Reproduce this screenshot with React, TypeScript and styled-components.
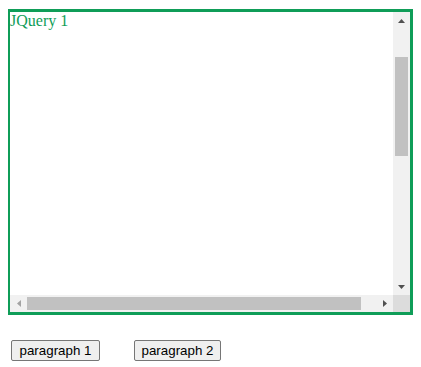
import React from "react";
import styled, { createGlobalStyle } from "styled-components";

const Global = createGlobalStyle`
  body { margin: 8px; font-family: "Liberation Serif", serif; background: #fff; }
`;

const Box = styled.div`
  width: 400px;
  height: 300px;
  border: 3px solid #0f9d58;
  display: grid;
  grid-template-columns: 1fr 17px;
  grid-template-rows: 1fr 17px;
  margin-top: 1px;
  margin-left: -1px;
`;

const Content = styled.div`
  color: #0f9d58;
  font-size: 16px;
  line-height: 18px;
  padding-left: 0;
  overflow: hidden;
`;

const VBar = styled.div`
  background: #f1f1f1;
  display: flex;
  flex-direction: column;
`;

const HBar = styled.div`
  background: #f1f1f1;
  display: flex;
  flex-direction: row;
`;

const Corner = styled.div`
  background: #dcdcdc;
`;

const Arrow = styled.div`
  width: 17px;
  height: 17px;
  flex: none;
  display: flex;
  align-items: center;
  justify-content: center;
`;

const VTrack = styled.div`
  flex: 1;
  display: flex;
  flex-direction: column;
  padding: 0 2px;
`;

const HTrack = styled.div`
  flex: 1;
  display: flex;
  padding: 2px 0;
`;

const VThumb = styled.div<{ $top: number; $size: number }>`
  margin-top: ${(p) => p.$top}px;
  height: ${(p) => p.$size}px;
  background: #c1c1c1;
`;

const HThumb = styled.div<{ $left: number; $size: number }>`
  margin-left: ${(p) => p.$left}px;
  width: ${(p) => p.$size}px;
  background: #c1c1c1;
`;

const Buttons = styled.div`
  display: flex;
  gap: 34px;
  margin-top: 25px;
  margin-left: 3px;
`;

const Btn = styled.button`
  font-family: "Liberation Sans", Arial, sans-serif;
  font-size: 13.33px;
  padding: 1px 0;
  width: ${89}px;
  height: 21px;
  background: #efefef;
  border: 1px solid #767676;
  border-radius: 2px;
  color: #000;
  &:last-child { width: 87px; }
`;

const Tri = ({ dir }: { dir: "up" | "down" | "left" | "right" }) => {
  const pts = {
    up: "0,4 7,4 3.5,0",
    down: "0,0 7,0 3.5,4",
    left: "4,0 4,7 0,3.5",
    right: "0,0 0,7 4,3.5",
  }[dir];
  const w = dir === "up" || dir === "down" ? 7 : 4;
  const h = dir === "up" || dir === "down" ? 4 : 7;
  return (
    <svg width={w} height={h} viewBox={`0 0 ${w} ${h}`}>
      <polygon points={pts} fill={dir === "left" ? "#a3a3a3" : "#505050"} />
    </svg>
  );
};

export default function App() {
  return (
    <>
      <Global />
      <Box>
        <Content>JQuery 1</Content>
        <VBar>
          <Arrow>
            <Tri dir="up" />
          </Arrow>
          <VTrack>
            <VThumb $top={28} $size={99} />
          </VTrack>
          <Arrow>
            <Tri dir="down" />
          </Arrow>
        </VBar>
        <HBar>
          <Arrow>
            <Tri dir="left" />
          </Arrow>
          <HTrack>
            <HThumb $left={0} $size={334} />
          </HTrack>
          <Arrow>
            <Tri dir="right" />
          </Arrow>
        </HBar>
        <Corner />
      </Box>
      <Buttons>
        <Btn>paragraph 1</Btn>
        <Btn>paragraph 2</Btn>
      </Buttons>
    </>
  );
}
